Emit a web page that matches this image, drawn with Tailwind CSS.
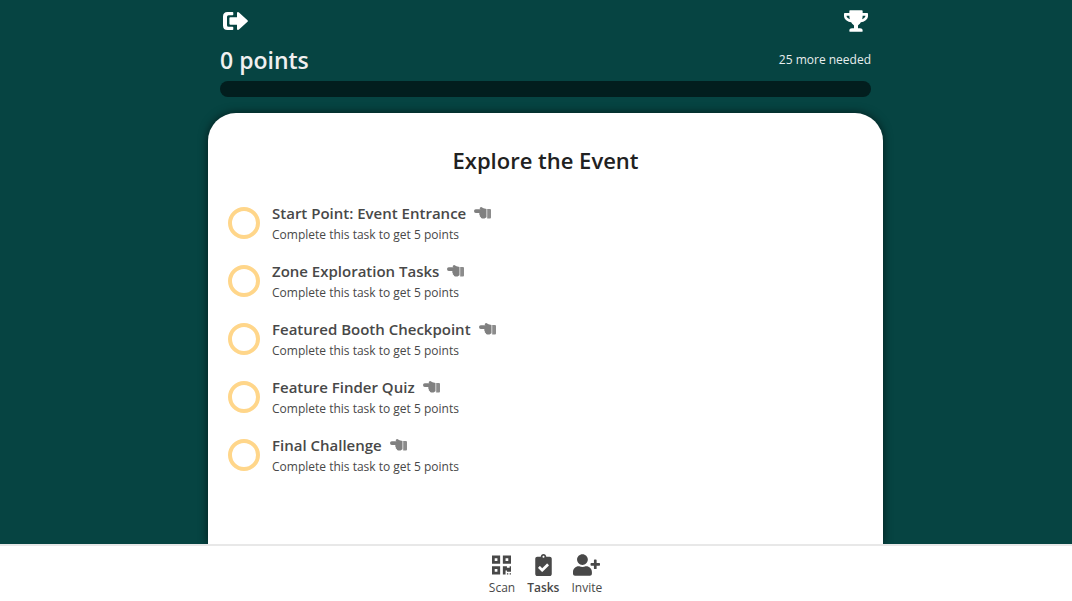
<!DOCTYPE html>
<html lang="en">
<head>
	<meta charset="UTF-8" />
	<meta name="viewport" content="width=device-width, initial-scale=1.0" />
	<title>Explore the Event</title>
	<script src="https://cdn.jsdelivr.net/npm/@tailwindcss/browser@4"></script>
</head>
<body class="h-screen flex flex-col overflow-hidden bg-[#064442] font-['Open_Sans','Noto_Sans',sans-serif]">
	<main class="flex-1 min-h-0 w-full pl-[19px] flex flex-col items-center">
		<header class="w-full max-w-[675px] px-3 pb-4">
			<div class="h-10 pt-0.5 flex items-center justify-between text-white">
				<button type="button" aria-label="Log out" class="pl-[3px]">
					<svg class="w-[25px] h-[18px]" viewBox="0 0 25 18" fill="currentColor">
						<path d="M9.500 0q.8 0 .8.800v1.600q0 .800-.8.800H5.500Q4 3.200 4 4.700v8.600q0 1.500 1.500 1.500h4q.8 0 .8.800v1.600q0 .800-.8.800H4.500Q0 18 0 13.500v-9Q0 0 4.500 0z" />
						<path d="M14 1q0-1 1-1 .6 0 1 .4l8.500 7.800q.8.800 0 1.600L16 17.600q-.4.400-1 .4-1 0-1-1v-4.200H7.400q-1 0-1-1V6.200q0-1 1-1H14z" />
					</svg>
				</button>
				<button type="button" aria-label="Leaderboard" class="pr-[3px]">
					<svg class="w-6 h-[22px]" viewBox="0 0 576 512" fill="currentColor">
						<path d="M552 64H448V24c0-13.300-10.700-24-24-24H152c-13.300 0-24 10.700-24 24v40H24C10.700 64 0 74.700 0 88v56c0 35.700 22.500 72.400 61.900 100.700 31.500 22.700 69.800 37.100 110 41.700C203.300 338.500 240 360 240 360v72h-48c-35.300 0-64 20.700-64 56v12c0 6.600 5.400 12 12 12h296c6.600 0 12-5.400 12-12v-12c0-35.300-28.700-56-64-56h-48v-72s36.700-21.500 68.100-73.600c40.300-4.600 78.600-19 110-41.700 39.300-28.300 61.900-65 61.900-100.700V88c0-13.300-10.700-24-24-24zM99.300 192.800C74.900 175.200 64 155.600 64 144v-16h64.200c1 32.600 5.800 61.200 12.800 86.200-15.100-5.200-29.200-12.400-41.700-21.400zM512 144c0 16.100-17.700 36.100-35.300 48.800-12.500 9-26.700 16.200-41.800 21.400 7-25 11.800-53.600 12.800-86.200H512v16z" />
					</svg>
				</button>
			</div>
			<div class="h-10 flex items-center justify-between">
				<span class="text-[23px] font-semibold text-[#f0f0f0]">0 points</span>
				<span class="text-xs text-[#e8eeee]">25 more needed</span>
			</div>
			<div role="progressbar" aria-label="Points" aria-valuenow="0" aria-valuemin="0" aria-valuemax="25" class="h-4 mt-px rounded-full bg-[#021e1e]"></div>
		</header>

		<section class="flex-1 w-full max-w-[675px] px-5 pt-[31px] rounded-t-[28px] bg-white shadow-[0_0_10px_rgba(0,0,0,0.6)]">
			<h1 class="text-[22px] leading-8 font-semibold text-center text-[#212121] mb-6">Explore the Event</h1>
			<ul id="taskList" class="flex flex-col gap-3"></ul>
		</section>
	</main>

	<nav class="relative w-full pl-[19px] h-[57px] pt-2 border-t-2 border-[#e8e8e8] bg-white flex justify-center gap-3 text-xs text-[#484848]">
		<a href="#scan" class="flex flex-col items-center gap-1">
			<svg class="h-[22px] w-[19px]" viewBox="0 0 448 512" fill="currentColor">
				<path d="M0 224h192V32H0v192zM64 96h64v64H64V96zm192-64v192h192V32H256zm128 128h-64V96h64v64zM0 480h192V288H0v192zm64-128h64v64H64v-64zm352-64h32v128h-96v-32h-32v96h-64V288h96v32h64v-32zm0 160h32v32h-32v-32zm-64 0h32v32h-32v-32z" />
			</svg>
			<span>Scan</span>
		</a>
		<a href="#tasks" aria-current="page" class="flex flex-col items-center gap-1">
			<svg class="h-[22px] w-[17px]" viewBox="0 0 384 512" fill="currentColor">
				<path d="M336 64h-80c0-35.300-28.700-64-64-64s-64 28.700-64 64H48C21.500 64 0 85.500 0 112v352c0 26.500 21.500 48 48 48h288c26.500 0 48-21.500 48-48V112c0-26.500-21.500-48-48-48zM192 40c13.300 0 24 10.700 24 24s-10.700 24-24 24-24-10.700-24-24 10.700-24 24-24zm121.200 231.800l-143 141.800c-4.700 4.700-12.300 4.600-17-.1l-82.600-83.300c-4.700-4.700-4.600-12.300.1-17L99.100 285c4.700-4.700 12.300-4.600 17 .1l46 46.400 106-105.200c4.700-4.700 12.300-4.600 17 .1l28.200 28.400c4.700 4.800 4.600 12.300-.1 17z" />
			</svg>
			<span class="font-semibold">Tasks</span>
		</a>
		<a href="#invite" class="flex flex-col items-center gap-1">
			<svg class="h-[22px] w-[27px]" viewBox="0 0 640 512" fill="currentColor">
				<path d="M624 208h-64v-64c0-8.800-7.200-16-16-16h-32c-8.800 0-16 7.200-16 16v64h-64c-8.800 0-16 7.200-16 16v32c0 8.800 7.200 16 16 16h64v64c0 8.800 7.200 16 16 16h32c8.800 0 16-7.200 16-16v-64h64c8.800 0 16-7.200 16-16v-32c0-8.800-7.200-16-16-16zm-400 48c70.700 0 128-57.300 128-128S294.700 0 224 0 96 57.300 96 128s57.300 128 128 128zm89.600 32h-16.700c-22.200 10.200-46.900 16-72.900 16s-50.600-5.800-72.900-16h-16.700C60.200 288 0 348.200 0 422.400V464c0 26.500 21.500 48 48 48h352c26.500 0 48-21.500 48-48v-41.600c0-74.200-60.200-134.400-134.400-134.400z" />
			</svg>
			<span>Invite</span>
		</a>
	</nav>

	<script>
		const tasks = [
			"Start Point: Event Entrance",
			"Zone Exploration Tasks",
			"Featured Booth Checkpoint",
			"Feature Finder Quiz",
			"Final Challenge"
		];

		document.getElementById("taskList").innerHTML = tasks.map(t => `
			<li>
				<button type="button" class="h-[46px] flex items-center gap-3 text-left text-[#484848]">
					<span class="size-8 shrink-0 rounded-full border-4 border-[#ffd68a]"></span>
					<span class="flex flex-col">
						<span class="flex items-center gap-2 text-[15px] leading-6 font-semibold">${t}
							<svg class="w-[17px] h-3 text-[#808080]" viewBox="0 0 17 12" fill="currentColor">
								<path d="M0 4q0-1.800 1.800-1.800H6.500L5.600 1.500Q5.800 0 7.200 0L9.500 1.200 12.500 2v8.300l-2 1.200H8.200q-1.500 0-1.500-1.400Q5.500 9.500 5.800 8.200 4.800 7.200 5.400 6H1.800Q0 6 0 4z" />
								<path d="M13.200 2H16q1 0 1 1v7.500q0 1-1 1h-2.800z" opacity=".9" />
							</svg>
						</span>
						<span class="text-xs leading-5">Complete this task to get 5 points</span>
					</span>
				</button>
			</li>`).join("");
	</script>
</body>
</html>
